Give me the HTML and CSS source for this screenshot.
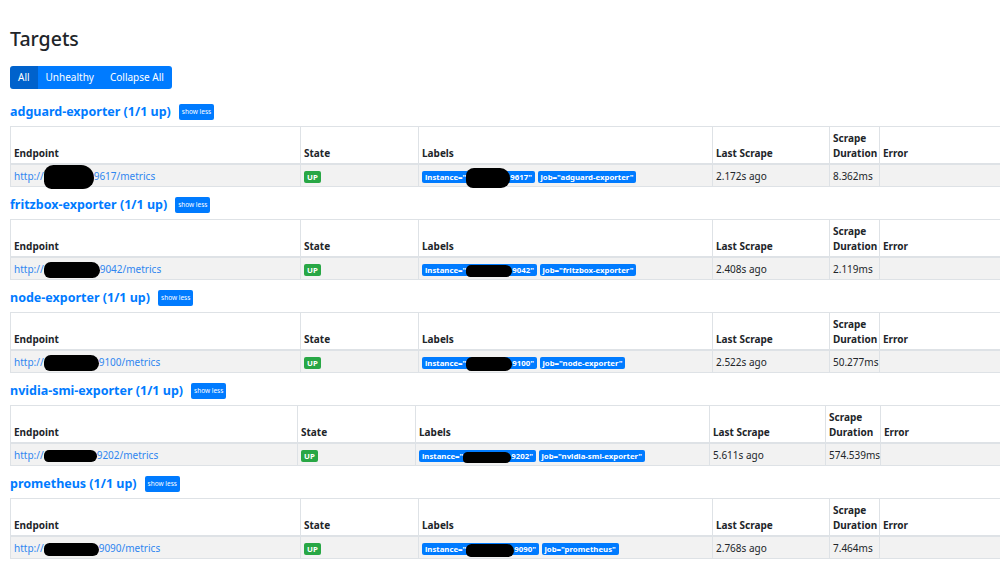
FILE: index.html
```html
<!DOCTYPE html>
<html lang="en">
<head>
<meta charset="utf-8">
<title>Targets</title>
<link rel="stylesheet" href="styles.css">
</head>
<body>
<main class="page">
  <h1 class="title">Targets</h1>
  <div class="btn-group">
    <button class="btn active">All</button>
    <button class="btn">Unhealthy</button>
    <button class="btn">Collapse All</button>
  </div>

  <section class="pool">
    <div class="pool-head">
      <a class="pool-name">adguard-exporter (1/1 up)</a>
      <button class="btn-xs">show less</button>
    </div>
    <table class="targets">
      <thead>
        <tr><th class="c-end">Endpoint</th><th class="c-state">State</th><th class="c-labels">Labels</th><th class="c-last">Last Scrape</th><th class="c-dur">Scrape Duration</th><th class="c-err">Error</th></tr>
      </thead>
      <tbody>
        <tr>
          <td><a class="link">http://<span class="redact r1"></span>9617/metrics</a></td>
          <td><span class="badge up">UP</span></td>
          <td><span class="badge">instance="<span class="redact rb1"></span>9617"</span> <span class="badge">job="adguard-exporter"</span></td>
          <td>2.172s ago</td>
          <td>8.362ms</td>
          <td></td>
        </tr>
      </tbody>
    </table>
  </section>

  <section class="pool">
    <div class="pool-head">
      <a class="pool-name">fritzbox-exporter (1/1 up)</a>
      <button class="btn-xs">show less</button>
    </div>
    <table class="targets">
      <thead>
        <tr><th class="c-end">Endpoint</th><th class="c-state">State</th><th class="c-labels">Labels</th><th class="c-last">Last Scrape</th><th class="c-dur">Scrape Duration</th><th class="c-err">Error</th></tr>
      </thead>
      <tbody>
        <tr>
          <td><a class="link">http://<span class="redact r2"></span>9042/metrics</a></td>
          <td><span class="badge up">UP</span></td>
          <td><span class="badge">instance="<span class="redact rb2"></span>9042"</span> <span class="badge">job="fritzbox-exporter"</span></td>
          <td>2.408s ago</td>
          <td>2.119ms</td>
          <td></td>
        </tr>
      </tbody>
    </table>
  </section>

  <section class="pool">
    <div class="pool-head">
      <a class="pool-name">node-exporter (1/1 up)</a>
      <button class="btn-xs">show less</button>
    </div>
    <table class="targets">
      <thead>
        <tr><th class="c-end">Endpoint</th><th class="c-state">State</th><th class="c-labels">Labels</th><th class="c-last">Last Scrape</th><th class="c-dur">Scrape Duration</th><th class="c-err">Error</th></tr>
      </thead>
      <tbody>
        <tr>
          <td><a class="link">http://<span class="redact r3"></span>9100/metrics</a></td>
          <td><span class="badge up">UP</span></td>
          <td><span class="badge">instance="<span class="redact rb3"></span>9100"</span> <span class="badge">job="node-exporter"</span></td>
          <td>2.522s ago</td>
          <td>50.277ms</td>
          <td></td>
        </tr>
      </tbody>
    </table>
  </section>

  <section class="pool">
    <div class="pool-head">
      <a class="pool-name">nvidia-smi-exporter (1/1 up)</a>
      <button class="btn-xs">show less</button>
    </div>
    <table class="targets wide-dur">
      <thead>
        <tr><th class="c-end">Endpoint</th><th class="c-state">State</th><th class="c-labels">Labels</th><th class="c-last">Last Scrape</th><th class="c-dur">Scrape Duration</th><th class="c-err">Error</th></tr>
      </thead>
      <tbody>
        <tr>
          <td><a class="link">http://<span class="redact r4"></span>9202/metrics</a></td>
          <td><span class="badge up">UP</span></td>
          <td><span class="badge">instance="<span class="redact rb4"></span>9202"</span> <span class="badge">job="nvidia-smi-exporter"</span></td>
          <td>5.611s ago</td>
          <td>574.539ms</td>
          <td></td>
        </tr>
      </tbody>
    </table>
  </section>

  <section class="pool">
    <div class="pool-head">
      <a class="pool-name">prometheus (1/1 up)</a>
      <button class="btn-xs">show less</button>
    </div>
    <table class="targets">
      <thead>
        <tr><th class="c-end">Endpoint</th><th class="c-state">State</th><th class="c-labels">Labels</th><th class="c-last">Last Scrape</th><th class="c-dur">Scrape Duration</th><th class="c-err">Error</th></tr>
      </thead>
      <tbody>
        <tr>
          <td><a class="link">http://<span class="redact r5"></span>9090/metrics</a></td>
          <td><span class="badge up">UP</span></td>
          <td><span class="badge">instance="<span class="redact rb5"></span>9090"</span> <span class="badge">job="prometheus"</span></td>
          <td>2.768s ago</td>
          <td>7.464ms</td>
          <td></td>
        </tr>
      </tbody>
    </table>
  </section>
</main>
</body>
</html>
```

FILE: styles.css
```css
html, body {
  margin: 0;
  padding: 0;
  overflow: hidden;
  background: #fff;
}

body {
  font-family: "Noto Sans", "Open Sans", sans-serif;
  font-size: 10px;
  line-height: 15px;
  color: #212529;
}

.page {
  padding: 0 0 0 10px;
}

.title {
  margin: 0;
  padding-top: 24px;
  font-size: 19.5px;
  font-weight: 500;
  line-height: 29px;
  margin-bottom: 13px;
}

.btn-group {
  display: inline-flex;
  border-radius: 3px;
  overflow: hidden;
}

.btn {
  font-family: inherit;
  font-size: 10px;
  height: 23px;
  line-height: 23px;
  padding: 0 8px;
  border: 0;
  background: #007bff;
  color: #fff;
}

.btn.active {
  background: #0062cc;
}

.pool-head {
  display: flex;
  align-items: center;
  gap: 8px;
  height: 18px;
  margin: 14px 0 5px;
}

.pool + .pool .pool-head {
  margin-top: 9px;
}

.pool-name {
  color: #007bff;
  font-weight: 700;
  font-size: 12.5px;
  line-height: 18px;
}

.btn-xs {
  font-family: inherit;
  font-size: 6.5px;
  line-height: 16px;
  height: 16px;
  padding: 0 3px;
  border: 0;
  border-radius: 2px;
  background: #007bff;
  color: #fff;
}

.targets {
  border-collapse: collapse;
  table-layout: fixed;
  width: 1010px;
}

.targets th,
.targets td {
  box-sizing: border-box;
  border: 1px solid #dee2e6;
  padding: 3px 4px 3px 3px;
  text-align: left;
  vertical-align: bottom;
}

.targets th {
  font-weight: 700;
  border-bottom-width: 2px;
}

.targets thead th {
  padding-top: 4px;
  padding-bottom: 2px;
}

.targets td {
  vertical-align: middle;
  white-space: nowrap;
}

.targets tbody td {
  padding-top: 4px;
  padding-bottom: 2px;
}

.targets tbody tr {
  background: #f2f2f2;
}

.c-end { width: 290px; }
.c-state { width: 118px; }
.c-labels { width: 294px; }
.c-last { width: 117px; }
.c-dur { width: 50px; }
.c-err { width: auto; }

.wide-dur .c-end { width: 287px; }
.wide-dur .c-last { width: 116px; }
.wide-dur .c-dur { width: 55px; }

.link {
  color: #2f86f0;
}

.badge {
  display: inline-block;
  font-size: 7.8px;
  font-weight: 700;
  line-height: 12px;
  padding: 0 3px;
  border-radius: 2px;
  background: #007bff;
  color: #fff;
  vertical-align: middle;
}

.badge.up {
  background: #28a745;
}

.redact {
  display: inline-block;
  background: #000;
  vertical-align: middle;
  height: 16px;
  margin: -4px 0;
  border-radius: 8px 10px 9px 7px;
}

.r1 { width: 50px; height: 24px; margin: -7px 0; border-radius: 10px 14px 12px 8px; }
.r2 { width: 56px; }
.r3 { width: 55px; }
.r4 { width: 53px; height: 12px; }
.r5 { width: 55px; height: 13px; }

.rb1 { width: 44px; height: 20px; margin: -5px 0; }
.rb2 { width: 46px; height: 12px; }
.rb3 { width: 46px; height: 14px; }
.rb4 { width: 48px; height: 11px; }
.rb5 { width: 48px; height: 13px; }
```
